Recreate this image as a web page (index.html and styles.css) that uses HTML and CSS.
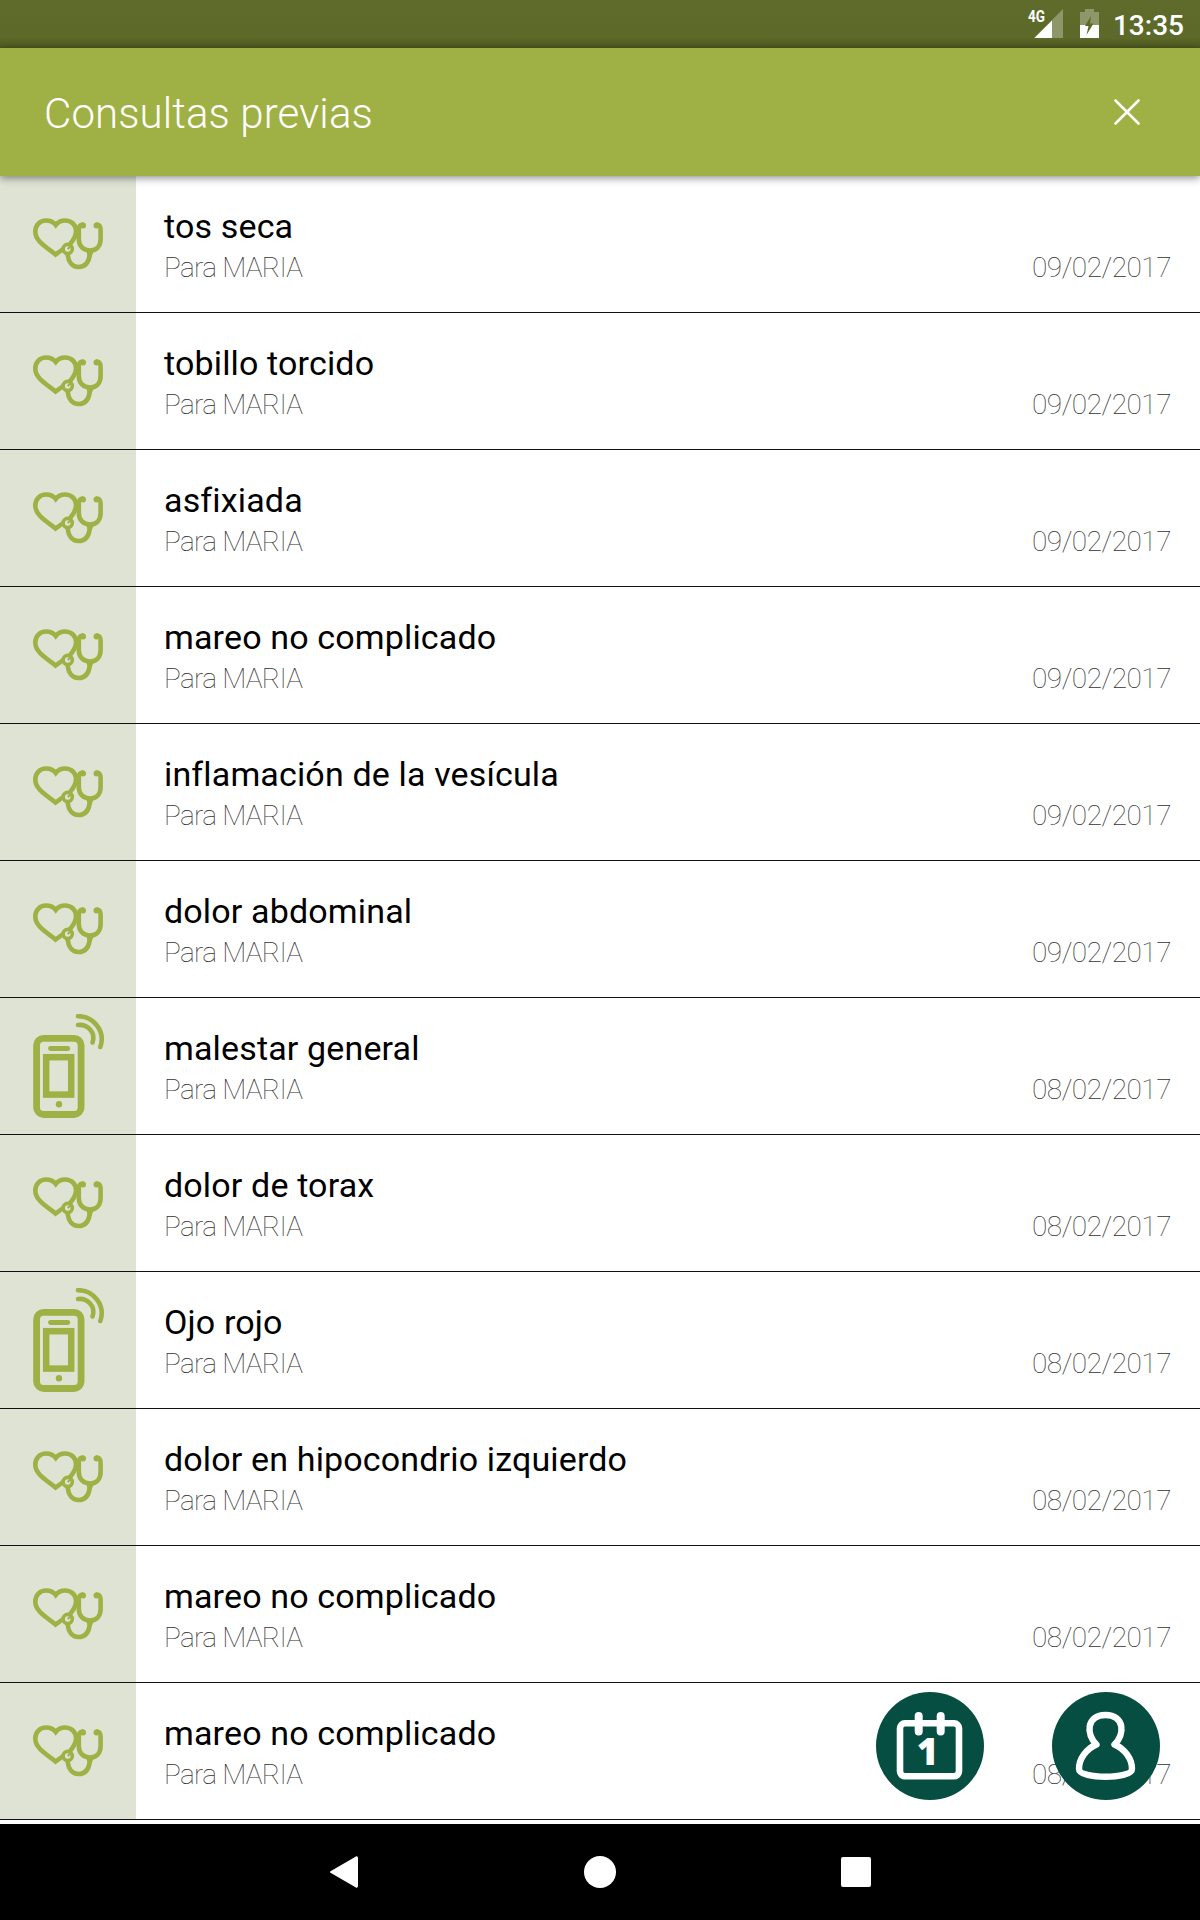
FILE: index.html
```html
<!DOCTYPE html>
<html lang="es">
<head>
    <meta charset="UTF-8">
    <meta name="viewport" content="width=device-width, initial-scale=1.0">
    <title>Consultas previas</title>
    <link rel="stylesheet" href="styles.css">
</head>
<body>
    <svg class="sprite">
        <symbol id="heart" viewBox="0 0 70 52">
            <g fill="none" stroke="#9fb144" stroke-width="4.6" stroke-linecap="round">
                <path d="M29.5 31.5 L22.5 36.5 C15 30 2.3 24 2.3 13.5 C2.3 7 7 2.5 13 2.5 C17 2.5 20.5 4 22.7 7 C25 4 28 2.5 32 2.5 C38.5 2.5 43 7 43 13 C43 18 40.5 22 37.5 25.5"/>
                <circle cx="34.7" cy="31" r="4.6" stroke-width="3.6"/>
                <path d="M49.5 6.5 C46 7 45.8 9 45.8 12 V21 C45.8 28 50.5 32.5 57 32.5 C63.5 32.5 67.6 28 67.6 21 V12 C67.6 9 67.5 7 64 6.5"/>
                <path d="M57 34 C56.5 43 53 49 45.500 49 C39 49 35.500 44 34.700 37"/>
            </g>
            <circle cx="50" cy="7.5" r="3" fill="#9fb144"/>
            <circle cx="63.5" cy="7.5" r="3" fill="#9fb144"/>
            <path d="M53 32 H61 L58.5 39 H55 Z" fill="#9fb144"/>
            <path d="M34.7 31 L38 28" stroke="#9fb144" stroke-width="2"/>
        </symbol>
        <symbol id="phone" viewBox="0 0 72 104">
            <g fill="none" stroke="#9fb144" stroke-linecap="round">
                <rect x="3.6" y="24.3" width="44.5" height="76.2" rx="7" stroke-width="6.8"/>
                <path d="M17.5 34.5 H34.8" stroke-width="4.8"/>
                <rect x="13.2" y="43.2" width="25" height="37.4" stroke-width="6.5"/>
                <path d="M45 2.2 C60 2 73 17 67.3 33" stroke-width="4.6"/>
                <path d="M45 11 C55 10 63 19 59.5 28.5" stroke-width="4.6"/>
            </g>
            <circle cx="26" cy="90.3" r="3.2" fill="#9fb144"/>
        </symbol>
    </svg>

    <div class="status">
        <svg class="signal" width="36" height="30" viewBox="0 0 36 30">
            <path d="M35 1 V30 H6 Z" fill="#fff" opacity=".3"/>
            <path d="M24 12.5 V30 H6.5 Z" fill="#fff"/>
            <text x="0" y="14" textLength="17" lengthAdjust="spacingAndGlyphs">4G</text>
        </svg>
        <svg class="battery" width="19" height="29" viewBox="0 0 19 29">
            <path d="M5 0 H14 V3 H19 V16 H0 V3 H5 Z" fill="#fff" opacity=".3"/>
            <path d="M0 16 H19 V29 H0 Z" fill="#fff"/>
            <path d="M11 7 L5 17 H8.5 L6.5 26 L13.5 14.5 H10 Z" fill="#5c6929"/>
        </svg>
        <span class="time">13:35</span>
    </div>

    <div class="header">
        <h1>Consultas previas</h1>
        <svg class="close" width="26" height="26" viewBox="0 0 26 26">
            <path d="M1.5 1.5 L24.5 24.5 M24.5 1.5 L1.5 24.5" stroke="#fff" stroke-width="2.6" stroke-linecap="round"/>
        </svg>
    </div>

    <div class="list">
        <div class="row">
            <div class="icon"><svg class="heart"><use href="#heart"/></svg></div>
            <div class="info"><h2>tos seca</h2><p>Para MARIA</p></div>
            <p class="date">09/02/2017</p>
        </div>
        <div class="row">
            <div class="icon"><svg class="heart"><use href="#heart"/></svg></div>
            <div class="info"><h2>tobillo torcido</h2><p>Para MARIA</p></div>
            <p class="date">09/02/2017</p>
        </div>
        <div class="row">
            <div class="icon"><svg class="heart"><use href="#heart"/></svg></div>
            <div class="info"><h2>asfixiada</h2><p>Para MARIA</p></div>
            <p class="date">09/02/2017</p>
        </div>
        <div class="row">
            <div class="icon"><svg class="heart"><use href="#heart"/></svg></div>
            <div class="info"><h2>mareo no complicado</h2><p>Para MARIA</p></div>
            <p class="date">09/02/2017</p>
        </div>
        <div class="row">
            <div class="icon"><svg class="heart"><use href="#heart"/></svg></div>
            <div class="info"><h2>inflamación de la vesícula</h2><p>Para MARIA</p></div>
            <p class="date">09/02/2017</p>
        </div>
        <div class="row">
            <div class="icon"><svg class="heart"><use href="#heart"/></svg></div>
            <div class="info"><h2>dolor abdominal</h2><p>Para MARIA</p></div>
            <p class="date">09/02/2017</p>
        </div>
        <div class="row">
            <div class="icon"><svg class="phone"><use href="#phone"/></svg></div>
            <div class="info"><h2>malestar general</h2><p>Para MARIA</p></div>
            <p class="date">08/02/2017</p>
        </div>
        <div class="row">
            <div class="icon"><svg class="heart"><use href="#heart"/></svg></div>
            <div class="info"><h2>dolor de torax</h2><p>Para MARIA</p></div>
            <p class="date">08/02/2017</p>
        </div>
        <div class="row">
            <div class="icon"><svg class="phone"><use href="#phone"/></svg></div>
            <div class="info"><h2>Ojo rojo</h2><p>Para MARIA</p></div>
            <p class="date">08/02/2017</p>
        </div>
        <div class="row">
            <div class="icon"><svg class="heart"><use href="#heart"/></svg></div>
            <div class="info"><h2>dolor en hipocondrio izquierdo</h2><p>Para MARIA</p></div>
            <p class="date">08/02/2017</p>
        </div>
        <div class="row">
            <div class="icon"><svg class="heart"><use href="#heart"/></svg></div>
            <div class="info"><h2>mareo no complicado</h2><p>Para MARIA</p></div>
            <p class="date">08/02/2017</p>
        </div>
        <div class="row">
            <div class="icon"><svg class="heart"><use href="#heart"/></svg></div>
            <div class="info"><h2>mareo no complicado</h2><p>Para MARIA</p></div>
            <p class="date">08/02/2017</p>
        </div>

        <div class="actions">
            <svg width="108" height="108" viewBox="0 0 108 108">
                <circle cx="54" cy="54" r="54" fill="#064e41"/>
                <rect x="24" y="31.3" width="59" height="53" rx="5" fill="none" stroke="#fff" stroke-width="6.6"/>
                <path d="M42.7 24 V39.5 M64.7 24 V39.5" stroke="#fff" stroke-width="8" stroke-linecap="round"/>
                <text class="day" x="51.5" y="73" text-anchor="middle">1</text>
            </svg>
            <svg width="108" height="108" viewBox="0 0 108 108">
                <circle cx="54" cy="54" r="54" fill="#064e41"/>
                <path d="M44.5 52.5 C34 43 34 23 53.5 23 C73 23 73 43 62.5 52.5 C73 57 80 67 80 77 C80 82.5 66 84.8 53.5 84.8 C41 84.8 27 82.5 27 77 C27 67 34 57 44.5 52.5 Z" fill="none" stroke="#fff" stroke-width="6.4" stroke-linejoin="round"/>
            </svg>
        </div>
    </div>

    <div class="navbar">
        <svg width="32" height="32" viewBox="0 0 32 32"><path d="M3 16 L28 1.5 Q29 1 29 2 V30 Q29 31 28 30.5 Z" fill="#fff" stroke="#fff" stroke-width="2" stroke-linejoin="round"/></svg>
        <svg width="32" height="32" viewBox="0 0 32 32"><circle cx="16" cy="16" r="16" fill="#fff"/></svg>
        <svg width="32" height="32" viewBox="0 0 32 32"><rect x="1" y="1" width="30" height="30" rx="2" fill="#fff"/></svg>
    </div>
</body>
</html>
```
FILE: styles.css
```css
*{
    margin: 0;
    padding: 0;
    box-sizing: border-box;
}
body{
    width: 1200px;
    height: 1920px;
    display: flex;
    flex-direction: column;
    background: #fff;
    font-family: Roboto, sans-serif;
    overflow: hidden;
}
svg{
    display: block;
}
.sprite{
    display: none;
}
.status{
    height: 48px;
    display: flex;
    padding: 8px 16px 0 0;
    justify-content: flex-end;
    background: linear-gradient(#5e6b2a 0, #5c6929 38px, #4d581f 48px);
    color: #fff;
}
.signal{
    margin: 0 16px 0 0;
    overflow: visible;
}
.signal text{
    font-size: 17px;
    font-weight: 700;
    fill: #fff;
}
.battery{
    margin: 1px 14px 0 0;
}
.time{
    font-size: 28px;
    font-weight: 500;
    line-height: 35px;
}
.header{
    height: 128px;
    display: flex;
    align-items: center;
    justify-content: space-between;
    padding: 0 60px 0 44px;
    background: #9fb144;
    color: #fff;
    box-shadow: 0 2px 8px rgba(0,0,0,.45);
    z-index: 1;
}
.header h1{
    font-size: 42px;
    font-weight: 300;
    letter-spacing: .1px;
    line-height: 48px;
    padding-top: 4px;
}
.close{
    margin-bottom: 1px;
}
.list{
    height: 1648px;
    position: relative;
}
.row{
    height: 137px;
    display: flex;
    border-bottom: 1px solid #111;
}
.icon{
    width: 136px;
    display: flex;
    align-items: center;
    padding-left: 33px;
    background: #dfe3d4;
}
.heart{
    width: 70px;
    height: 52px;
    margin-bottom: 1px;
}
.phone{
    width: 72px;
    height: 104px;
}
.info{
    flex: 1;
    padding: 30px 0 0 28px;
}
.info h2{
    font-size: 34px;
    font-weight: 450;
    letter-spacing: .15px;
    line-height: 40px;
    color: #000;
}
.info p, .date{
    font-size: 28px;
    font-weight: 100;
    letter-spacing: -.7px;
    line-height: 34px;
    color: #333;
}
.info p{
    padding-top: 5px;
}
.date{
    padding: 75px 29px 0 0;
    letter-spacing: -.5px;
}
/* floating buttons over the last row */
.actions{
    position: absolute;
    right: 40px;
    bottom: 24px;
    display: flex;
    gap: 68px;
}
.day{
    font-family: "Open Sans", sans-serif;
    font-size: 37px;
    font-weight: 800;
    fill: #fff;
}
.navbar{
    height: 96px;
    display: flex;
    align-items: center;
    justify-content: center;
    gap: 224px;
    background: #000;
}
```
